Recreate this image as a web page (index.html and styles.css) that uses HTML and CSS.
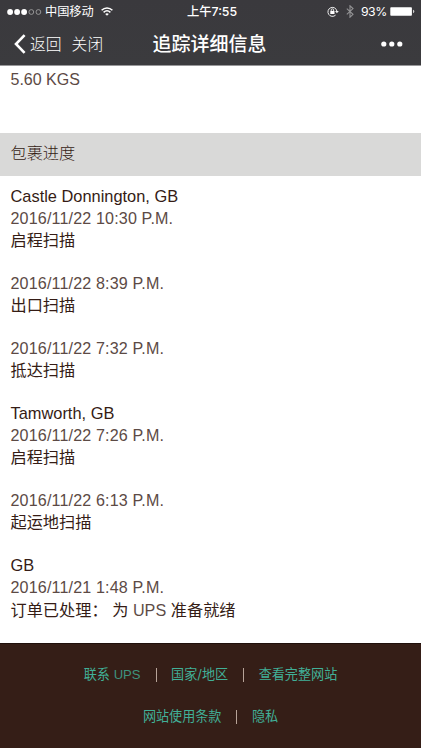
FILE: index.html
```html
<!DOCTYPE html>
<html lang="zh-CN">
<head>
    <meta charset="UTF-8">
    <meta name="viewport" content="width=device-width, initial-scale=1.0">
    <title>追踪详细信息</title>
    <link rel="stylesheet" href="styles.css">
</head>
<body>
    <header class="header">
        <div class="status">
            <div class="status-left">
                <svg class="signal" width="35" height="8" viewBox="0 0 35 8">
                    <circle cx="3.1" cy="4" r="2.9" fill="#fff"/>
                    <circle cx="10.1" cy="4" r="2.9" fill="#fff"/>
                    <circle cx="17.1" cy="4" r="2.9" fill="#fff"/>
                    <circle cx="24.3" cy="4" r="2.4" fill="none" stroke="#aaa" stroke-width=".8"/>
                    <circle cx="31.4" cy="4" r="2.4" fill="none" stroke="#aaa" stroke-width=".8"/>
                </svg>
                <span class="carrier">中国移动</span>
                <svg width="12" height="9" viewBox="0 0 12 9" fill="none" stroke="#fff" stroke-width="1.5">
                    <path d="M.6 3.3C3.7.2 8.3.2 11.4 3.3"/>
                    <path d="M2.6 5.4c2-1.9 4.8-1.9 6.8 0"/>
                    <path d="M6 8.8 4.2 7c1-.9 2.6-.9 3.6 0z" fill="#fff" stroke="none"/>
                </svg>
            </div>
            <div class="clock">上午7:55</div>
            <div class="status-right">
                <svg width="12" height="11" viewBox="0 0 12 11">
                    <path d="M8.6 9.1A4.5 4.5 0 1 1 9.9 5.2" fill="none" stroke="#eee" stroke-width="1"/>
                    <path d="M8 4.9h3.8L9.9 7.3z" fill="#eee"/>
                    <rect x="3.3" y="4.9" width="4.2" height="3.1" fill="#fff"/>
                    <path d="M4.2 5V4a1.2 1.2 0 0 1 2.4 0v1" fill="none" stroke="#fff" stroke-width=".8"/>
                </svg>
                <svg class="bluetooth" width="8" height="13" viewBox="0 0 8 13" fill="none" stroke="#929294" stroke-width="1.1">
                    <path d="M.8 3.6 7 9.3 4 12.2V.8l3 2.8L.8 9.4"/>
                </svg>
                <span class="percent">93%</span>
                <svg width="25" height="9" viewBox="0 0 25 9">
                    <rect x=".3" y=".3" width="21.6" height="8.4" rx=".8" fill="#fff"/>
                    <path d="M23 2.8q1.3.3 1.3 1.7T23 6.2z" fill="#ccc"/>
                </svg>
            </div>
        </div>
        <nav class="navbar">
            <div class="nav-left">
                <svg width="12" height="20" viewBox="0 0 12 20" fill="none" stroke="#fff" stroke-width="2.6">
                    <path d="M10.6 1.2 2 10l8.6 8.8"/>
                </svg>
                <span class="back">返回</span>
                <span class="close">关闭</span>
            </div>
            <h1 class="title">追踪详细信息</h1>
            <svg class="more" width="22" height="6" viewBox="0 0 22 6" fill="#fff">
                <circle cx="2.8" cy="3" r="2.6"/>
                <circle cx="10.8" cy="3" r="2.6"/>
                <circle cx="18.8" cy="3" r="2.6"/>
            </svg>
        </nav>
    </header>

    <main>
        <div class="weight">5.60 KGS</div>
        <h2 class="section-title">包裹进度</h2>
        <div class="progress">
            <div class="event">
                <div class="place">Castle Donnington, GB</div>
                <div class="date">2016/11/22 10:30 P.M.</div>
                <div class="scan">启程扫描</div>
            </div>
            <div class="event">
                <div class="date">2016/11/22 8:39 P.M.</div>
                <div class="scan">出口扫描</div>
            </div>
            <div class="event">
                <div class="date">2016/11/22 7:32 P.M.</div>
                <div class="scan">抵达扫描</div>
            </div>
            <div class="event">
                <div class="place">Tamworth, GB</div>
                <div class="date">2016/11/22 7:26 P.M.</div>
                <div class="scan">启程扫描</div>
            </div>
            <div class="event">
                <div class="date">2016/11/22 6:13 P.M.</div>
                <div class="scan">起运地扫描</div>
            </div>
            <div class="event">
                <div class="place">GB</div>
                <div class="date">2016/11/21 1:48 P.M.</div>
                <div class="scan">订单已处理： 为 <span class="thin">UPS</span> 准备就绪</div>
            </div>
        </div>
    </main>

    <footer class="footer">
        <div class="links">
            <a>联系 <span class="thin">UPS</span></a>
            <i class="bar"></i>
            <a>国家/地区</a>
            <i class="bar"></i>
            <a>查看完整网站</a>
        </div>
        <div class="links">
            <a>网站使用条款</a>
            <i class="bar"></i>
            <a>隐私</a>
        </div>
    </footer>
</body>
</html>
```

FILE: styles.css
```css
* {
    box-sizing: border-box;
}
body {
    margin: 0;
    height: 750px;
    overflow: hidden;
    background: #fff;
    color: #351c15;
    font-family: Inter, "Noto Sans CJK SC", sans-serif;
    font-size: 16px;
}
.header {
    height: 66px;
    background: linear-gradient(#3a393d, #3b3b3e);
    border-bottom: 1px solid #98989a;
    color: #fff;
}
.status {
    display: grid;
    grid-template-columns: 1fr auto 1fr;
    align-items: center;
    height: 22px;
    padding: 0 6px 0 7px;
    font-size: 12px;
    line-height: 22px;
}
.status-left, .status-right {
    display: flex;
    align-items: center;
}
.status-right {
    justify-content: flex-end;
}
.carrier {
    margin: 0 7px 0 3px;
    padding-top: 1px;
    font-size: 12.2px;
}
.clock {
    padding: 1px 0 0 2px;
    font-size: 12.3px;
    font-weight: 500;
}
.bluetooth {
    margin: 0 7px 0 7px;
}
.percent {
    margin-right: 3px;
    font-size: 12.3px;
    letter-spacing: -0.4px;
}
.navbar {
    display: grid;
    grid-template-columns: 1fr auto 1fr;
    align-items: center;
    height: 43px;
    padding: 0 18px 0 14px;
}
.nav-left {
    display: flex;
    align-items: center;
    font-size: 15.8px;
    font-weight: 300;
}
.back {
    margin: 0 10px 0 4px;
}
.title {
    margin: 0;
    padding: 2px 0 0 2px;
    font-size: 19px;
    font-weight: 500;
    line-height: 28px;
}
.more {
    justify-self: end;
}
.weight {
    height: 67px;
    padding: 3px 10.5px 0;
    color: #5c4a45;
    font-family: "Liberation Sans", sans-serif;
    line-height: 22px;
}
.section-title {
    height: 43px;
    margin: 0;
    padding: 0 10.5px;
    background: #d9d9d8;
    font-size: 16.2px;
    font-weight: 300;
    line-height: 41px;
}
.progress {
    height: 467px;
    padding: 8.6px 10.5px 0;
    line-height: 22.2px;
}
.event {
    margin-bottom: 20.7px;
}
.event div {
    height: 22.2px;
    white-space: nowrap;
}
.place {
    font-family: "Liberation Sans", sans-serif;
    font-size: 16.4px;
}
.date {
    color: #5c4a45;
    font-family: "Liberation Sans", sans-serif;
    font-size: 16.1px;
    letter-spacing: 0.15px;
}
.scan {
    font-size: 16.2px;
}
.thin {
    font-family: "Liberation Sans", sans-serif;
    opacity: 0.8;
}
.footer {
    height: 105px;
    padding-top: 20px;
    background: #351e17;
    border-top: 1px solid #20100c;
    color: #41b097;
    font-size: 13.1px;
}
.links {
    display: flex;
    justify-content: center;
    align-items: center;
    height: 22px;
    margin-bottom: 20px;
    line-height: 20px;
}
.links a {
    margin-top: -2px;
}
.bar {
    width: 1px;
    height: 14px;
    margin: 0 14.5px 0 15px;
    background: #b7a398;
}
```
